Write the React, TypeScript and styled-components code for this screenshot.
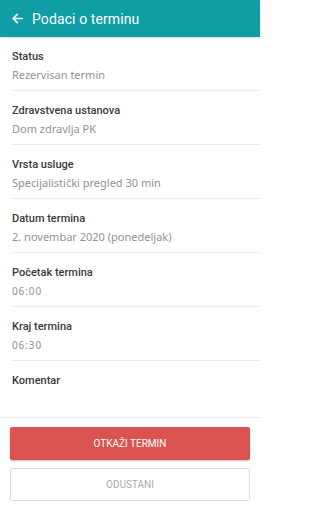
import styled, { createGlobalStyle } from 'styled-components';

const GlobalStyle = createGlobalStyle`
  html, body {
    margin: 0;
    padding: 0;
    background: #ffffff;
  }
  * {
    box-sizing: border-box;
  }
`;

const Page = styled.div`
  width: 260px;
  min-height: 512px;
  display: flex;
  flex-direction: column;
  background: #ffffff;
  font-family: Roboto, 'Liberation Sans', sans-serif;
`;

const Header = styled.header`
  height: 37px;
  background: #0f9ea5;
  display: flex;
  align-items: center;
  gap: 9px;
  padding-left: 12px;
  color: #ffffff;
  box-shadow: 0 1px 2px rgba(0, 0, 0, 0.15);
`;

const Title = styled.h1`
  margin: 0;
  font-family: Roboto, 'Liberation Sans', sans-serif;
  font-size: 14px;
  font-weight: 400;
  letter-spacing: 0.1px;
`;

const List = styled.div`
  display: flex;
  flex-direction: column;
`;

const Row = styled.div<{ $last?: boolean }>`
  margin-left: ${(p) => (p.$last ? '0' : '12px')};
  padding: 12px 0 7px ${(p) => (p.$last ? '12px' : '0')};
  min-height: ${(p) => (p.$last ? '57px' : 'auto')};
  border-bottom: 1px solid #ececec;
  display: flex;
  flex-direction: column;
  gap: 2px;
`;

const Label = styled.div`
  font-size: 11px;
  line-height: 16px;
  font-weight: 500;
  color: #3a3a3a;
`;

const Value = styled.div<{ $small?: boolean }>`
  font-family: 'Noto Sans', 'Open Sans', sans-serif;
  font-size: ${(p) => (p.$small ? '10px' : '11px')};
  letter-spacing: ${(p) => (p.$small ? '0.9px' : '0')};
  line-height: 16px;
  color: #929292;
`;

const Actions = styled.div`
  display: flex;
  flex-direction: column;
  gap: 8px;
  padding: 9px 10px 0;
`;

const Button = styled.button<{ $danger?: boolean }>`
  height: 33px;
  width: 100%;
  border-radius: 2px;
  font-family: Roboto, 'Liberation Sans', sans-serif;
  font-size: 10px;
  text-transform: uppercase;
  cursor: pointer;
  background: ${(p) => (p.$danger ? '#db5350' : '#ffffff')};
  color: ${(p) => (p.$danger ? '#ffffff' : '#ababab')};
  border: 1px solid ${(p) => (p.$danger ? '#db5350' : '#dcdcdc')};
  box-shadow: ${(p) => (p.$danger ? '0 1px 2px rgba(0,0,0,0.25)' : 'none')};
`;

const rows: [string, string, boolean?][] = [
  ['Status', 'Rezervisan termin'],
  ['Zdravstvena ustanova', 'Dom zdravlja PK'],
  ['Vrsta usluge', 'Specijalistički pregled 30 min'],
  ['Datum termina', '2. novembar 2020 (ponedeljak)'],
  ['Početak termina', '06:00', true],
  ['Kraj termina', '06:30', true],
];

function BackArrow() {
  return (
    <svg width="11" height="11" viewBox="0 0 24 24" fill="none">
      <path
        d="M22.5 12H2.5M11.5 3L2.5 12 11.5 21"
        stroke="#ffffff"
        strokeWidth="3.4"
        strokeLinecap="round"
        strokeLinejoin="round"
      />
    </svg>
  );
}

export default function App() {
  return (
    <>
      <GlobalStyle />
      <Page>
        <Header>
          <BackArrow />
          <Title>Podaci o terminu</Title>
        </Header>

        <List>
          {rows.map(([label, value, small]) => (
            <Row key={label}>
              <Label>{label}</Label>
              <Value $small={small}>{value}</Value>
            </Row>
          ))}
          <Row $last>
            <Label>Komentar</Label>
          </Row>
        </List>

        <Actions>
          <Button $danger>Otkaži termin</Button>
          <Button>Odustani</Button>
        </Actions>
      </Page>
    </>
  );
}
